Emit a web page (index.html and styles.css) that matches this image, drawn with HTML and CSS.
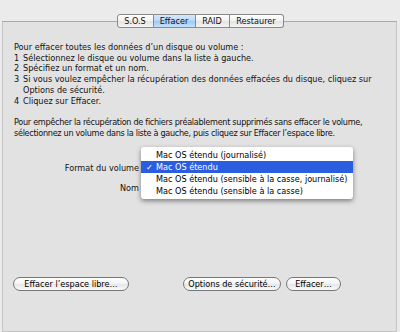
FILE: index.html
```html
<!DOCTYPE html>
<html lang="fr">
<head>
    <meta charset="UTF-8">
    <title>Utilitaire de disque - Effacer</title>
    <link rel="stylesheet" href="styles.css">
</head>
<body>
    <div class="tabs">
        <div class="tab sos">S.O.S</div>
        <div class="tab active">Effacer</div>
        <div class="tab">RAID</div>
        <div class="tab">Restaurer</div>
    </div>
    <div class="panel">
        <div class="intro">
            <p>Pour effacer toutes les données d’un disque ou volume :</p>
            <p class="step"><span class="num">1</span><span>Sélectionnez le disque ou volume dans la liste à gauche.</span></p>
            <p class="step"><span class="num">2</span><span>Spécifiez un format et un nom.</span></p>
            <p class="step"><span class="num">3</span><span>Si vous voulez empêcher la récupération des données effacées du disque, cliquez sur Options de sécurité.</span></p>
            <p class="step"><span class="num">4</span><span>Cliquez sur Effacer.</span></p>
        </div>
        <p class="intro second">Pour empêcher la récupération de fichiers préalablement supprimés sans effacer le volume, sélectionnez un volume dans la liste à gauche, puis cliquez sur Effacer l’espace libre.</p>

        <div class="form">
            <div class="row">
                <label class="lbl">Format du volume</label>
                <div class="popup"></div>
            </div>
            <div class="row">
                <label class="lbl">Nom</label>
                <div class="field"></div>
            </div>
            <ul class="menu">
                <li>Mac OS étendu (journalisé)</li>
                <li class="selected"><span class="check">✓</span>Mac OS étendu</li>
                <li>Mac OS étendu (sensible à la casse, journalisé)</li>
                <li>Mac OS étendu (sensible à la casse)</li>
            </ul>
        </div>

        <div class="buttons">
            <button class="btn wide">Effacer l’espace libre…</button>
            <div class="right">
                <button class="btn opts">Options de sécurité…</button>
                <button class="btn erase">Effacer…</button>
            </div>
        </div>
    </div>
</body>
</html>
```

FILE: styles.css
```css
body {
    margin: 0;
    background: #ebebeb;
    font-family: "DejaVu Sans", sans-serif;
    font-size: 8.15px;
    color: #111;
}
.tabs {
    display: flex;
    justify-content: center;
    margin-top: 14px;
    position: relative;
    z-index: 1;
}
.tab {
    height: 12px;
    line-height: 12px;
    text-align: center;
    background: linear-gradient(#ffffff, #f1f1f1 50%, #e3e3e3 51%, #f4f4f4);
    border: 1px solid #8a8a8a;
    border-left: none;
    width: 33px;
}
.tab.sos {
    width: 35px;
}
.tab.active {
    width: 41px;
    background: linear-gradient(#d7e9fb, #b9d8f7 50%, #9cc8f3 51%, #c6e2fb);
}
.tab:first-child {
    border-left: 1px solid #8a8a8a;
    border-radius: 3px 0 0 3px;
}
.tab:last-child {
    width: 53px;
    border-radius: 0 3px 3px 0;
}
.panel {
    position: relative;
    margin: -7px 3px 0 2px;
    height: 309px;
    border: 1px solid #c4c4c4;
    border-top-color: #a9a9a9;
    background: #e2e2e2;
    padding: 0 10px 0 11px;
}
.intro {
    margin-top: 20px;
}
.intro p, p.intro {
    margin: 0;
    line-height: 10.7px;
}
.step {
    display: flex;
}
.num {
    width: 9px;
    flex-shrink: 0;
}
.second {
    margin-top: 11px !important;
    letter-spacing: -0.3px;
}
.form {
    margin-top: 19px;
}
.row {
    display: flex;
    align-items: center;
    height: 20px;
}
.lbl {
    width: 125px;
    text-align: right;
    padding-right: 3px;
}
.menu {
    position: absolute;
    left: 138px;
    top: 125px;
    width: 212px;
    margin: 0;
    padding: 2px 0;
    list-style: none;
    background: #fff;
    border-radius: 3px;
    box-shadow: 0 2px 5px rgba(0, 0, 0, 0.45);
}
.menu li {
    height: 12px;
    line-height: 12px;
    padding-left: 15px;
    position: relative;
    color: #000;
    white-space: nowrap;
}
.menu li.selected {
    background: #2b5de0;
    color: #fff;
}
.check {
    position: absolute;
    left: 5px;
}
.buttons {
    position: absolute;
    left: 10px;
    top: 255px;
    display: flex;
}
.right {
    margin-left: 54px;
    display: flex;
    gap: 5px;
}
.btn {
    height: 14px;
    padding: 0;
    font: inherit;
    color: #000;
    white-space: nowrap;
    border: 1px solid #777;
    border-radius: 7px;
    background: linear-gradient(#ffffff, #f3f3f3 50%, #e6e6e6 51%, #fafafa);
}
.btn.wide {
    width: 116px;
}
.btn.opts {
    width: 98px;
}
.btn.erase {
    width: 55px;
}
```
